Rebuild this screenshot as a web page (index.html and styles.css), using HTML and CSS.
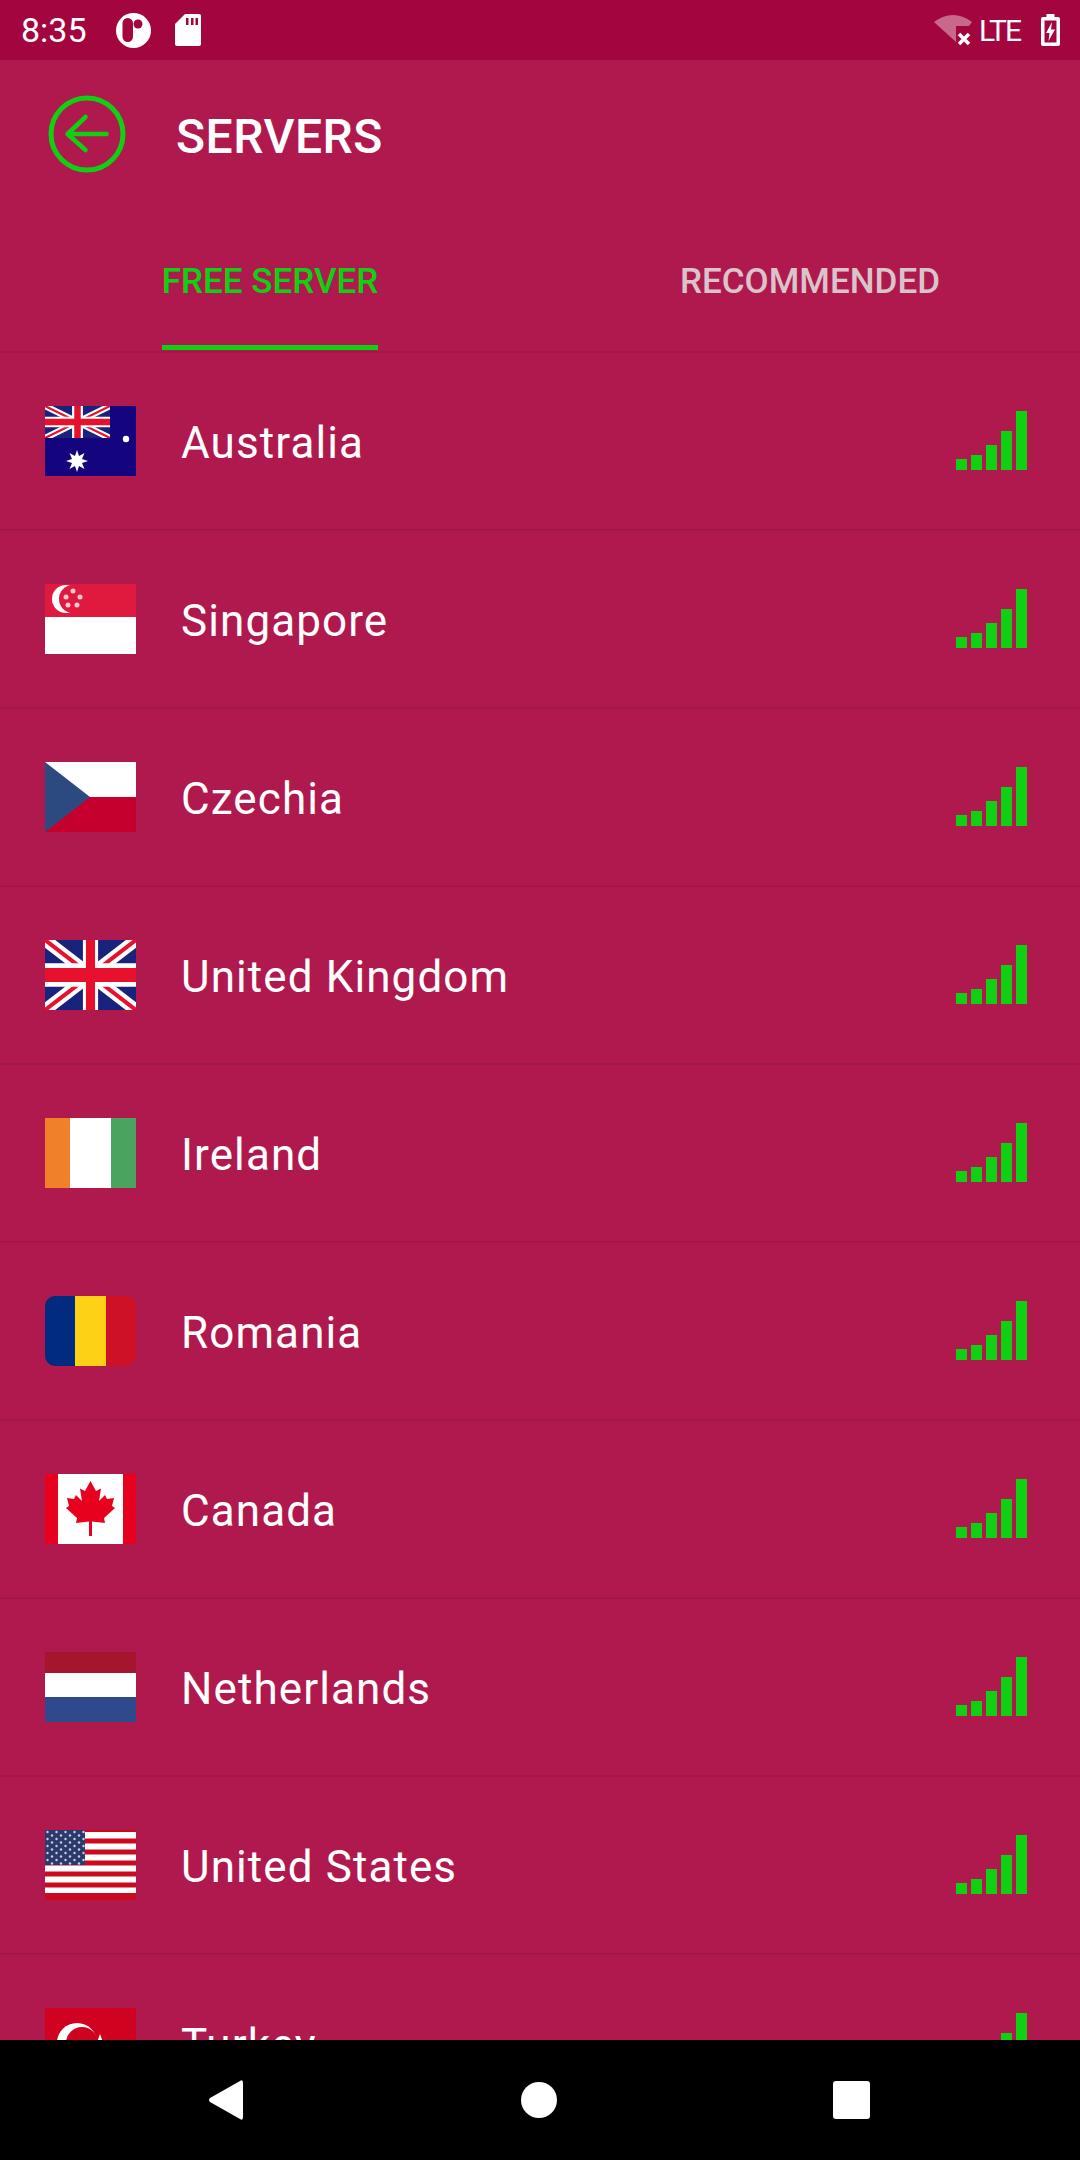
FILE: index.html
```html
<!DOCTYPE html>
<html lang="en">
<head>
  <meta charset="UTF-8" />
  <title>Servers</title>
  <link rel="stylesheet" href="styles.css">
</head>
<body>
  <svg class="defs" width="0" height="0">
    <defs>
      <symbol id="jack" viewBox="0 0 60 30" preserveAspectRatio="none">
        <rect width="60" height="30" fill="#1a237b"/>
        <path d="M0 0L60 30M60 0L0 30" stroke="#fff" stroke-width="6"/>
        <path d="M0 0L60 30M60 0L0 30" stroke="#e8112d" stroke-width="2"/>
        <path d="M30 0V30M0 15H60" stroke="#fff" stroke-width="10"/>
        <path d="M30 0V30M0 15H60" stroke="#e8112d" stroke-width="6"/>
      </symbol>
      <pattern id="usStars" width="9" height="7" patternUnits="userSpaceOnUse">
        <circle cx="2.500" cy="2" r="1.200" fill="#c9cfe0"/>
        <circle cx="7" cy="5.500" r="1.200" fill="#c9cfe0"/>
      </pattern>
    </defs>
  </svg>

  <div class="status">
    <div class="status-left">
      <span class="clock">8:35</span>
      <svg class="ic-p" width="35" height="35" viewBox="0 0 35 35">
        <circle cx="17.500" cy="17.500" r="17.500" fill="#fff"/>
        <rect x="6.500" y="5" width="10.500" height="24" rx="5.200" fill="#a3063e"/>
        <circle cx="22" cy="11" r="4.500" fill="#a3063e"/>
      </svg>
      <svg class="ic-sd" width="26" height="32" viewBox="0 0 26 32">
        <path d="M10 0H24a2 2 0 0 1 2 2V30a2 2 0 0 1-2 2H2a2 2 0 0 1-2-2V10Z" fill="#fff"/>
        <path d="M11 4h2.500v7H11zM16 4h2.500v7H16zM20.500 4H23v7h-2.500z" fill="#a3063e"/>
      </svg>
    </div>
    <div class="status-right">
      <svg class="ic-wifi" width="38" height="32" viewBox="0 0 38 32">
        <path d="M0 8Q19-6 38 8L35 12H22V28Z" fill="#fff" fill-opacity=".4"/>
        <path d="M25 20L35 30M35 20L25 30" stroke="#fff" stroke-width="3.500"/>
      </svg>
      <span class="lte">LTE</span>
      <svg class="ic-batt" width="19" height="32" viewBox="0 0 19 32">
        <path fill-rule="evenodd" d="M5.500 0H13.500V3H17a2 2 0 0 1 2 2V30a2 2 0 0 1-2 2H2a2 2 0 0 1-2-2V5a2 2 0 0 1 2-2H5.500ZM3.500 6.500V28.500H15.500V6.500Z" fill="#fff"/>
        <path d="M11 8L5 19H8.500L7.500 27L14 15.500H10Z" fill="#fff"/>
      </svg>
    </div>
  </div>

  <div class="toolbar">
    <svg class="back" width="80" height="80" viewBox="0 0 80 80">
      <circle cx="40" cy="40" r="36" fill="none" stroke="#10d014" stroke-width="5"/>
      <path d="M59.500 40H20.500M38.500 23L20.500 40L38.500 56" fill="none" stroke="#10d014" stroke-width="4.500" stroke-linecap="round" stroke-linejoin="round"/>
    </svg>
    <h1 class="title">SERVERS</h1>
  </div>

  <div class="tabs">
    <div class="tab active"><span>FREE SERVER</span></div>
    <div class="tab"><span>RECOMMENDED</span></div>
  </div>

  <div class="list">
    <div class="row">
      <svg class="flag" viewBox="0 0 91 70">
        <rect width="91" height="70" fill="#14057f"/>
        <use href="#jack" width="65" height="32"/>
        <path d="M32 44l2 6 5.500-3-2.500 6 6 2-6 2 2.500 6-5.500-3-2 6-2-6-5.500 3 2.500-6-6-2 6-2-2.500-6 5.500 3Z" fill="#fff"/>
        <circle cx="81" cy="33" r="3.200" fill="#fff"/>
      </svg>
      <span class="name">Australia</span>
      <div class="bars"><i></i><i></i><i></i><i></i><i></i></div>
    </div>
    <div class="row">
      <svg class="flag" viewBox="0 0 91 70">
        <rect width="91" height="33" fill="#e0193e"/>
        <rect y="33" width="91" height="37" fill="#fff"/>
        <circle cx="21" cy="15" r="14" fill="#fff"/>
        <circle cx="28" cy="15" r="14" fill="#e0193e"/>
        <g fill="#f6ccd3">
          <circle cx="28" cy="7" r="2.500"/><circle cx="35" cy="13" r="2.500"/><circle cx="32" cy="21" r="2.500"/><circle cx="23" cy="21" r="2.500"/><circle cx="21" cy="13" r="2.500"/>
        </g>
      </svg>
      <span class="name">Singapore</span>
      <div class="bars"><i></i><i></i><i></i><i></i><i></i></div>
    </div>
    <div class="row">
      <svg class="flag" viewBox="0 0 91 70">
        <rect width="91" height="35" fill="#fff"/>
        <rect y="35" width="91" height="35" fill="#c5002e"/>
        <path d="M0 0L45 35L0 70Z" fill="#2d4a80"/>
      </svg>
      <span class="name">Czechia</span>
      <div class="bars"><i></i><i></i><i></i><i></i><i></i></div>
    </div>
    <div class="row">
      <svg class="flag" viewBox="0 0 91 70"><use href="#jack" width="91" height="70"/></svg>
      <span class="name">United Kingdom</span>
      <div class="bars"><i></i><i></i><i></i><i></i><i></i></div>
    </div>
    <div class="row">
      <svg class="flag" viewBox="0 0 91 70">
        <rect width="25" height="70" fill="#f0802a"/>
        <rect x="25" width="41" height="70" fill="#fff"/>
        <rect x="66" width="25" height="70" fill="#4ba360"/>
      </svg>
      <span class="name">Ireland</span>
      <div class="bars"><i></i><i></i><i></i><i></i><i></i></div>
    </div>
    <div class="row">
      <svg class="flag flag-round" viewBox="0 0 91 70">
        <rect width="30" height="70" fill="#002b7f"/>
        <rect x="30" width="31" height="70" fill="#fcd116"/>
        <rect x="61" width="30" height="70" fill="#ce1126"/>
      </svg>
      <span class="name">Romania</span>
      <div class="bars"><i></i><i></i><i></i><i></i><i></i></div>
    </div>
    <div class="row">
      <svg class="flag" viewBox="0 0 91 70">
        <rect width="91" height="70" fill="#fff"/>
        <rect width="13" height="70" fill="#e8001f"/>
        <rect x="78" width="13" height="70" fill="#e8001f"/>
        <path d="M45.500 7L51 17L56 14.500L54 27L60 21L62 25L69 24L67 32L70 34L59 44L60 49L47 47.500V62H44V47.500L31 49L32 44L21 34L24 32L22 24L29 25L31 21L37 27L35 14.500L40 17Z" fill="#e8001f"/>
      </svg>
      <span class="name">Canada</span>
      <div class="bars"><i></i><i></i><i></i><i></i><i></i></div>
    </div>
    <div class="row">
      <svg class="flag" viewBox="0 0 91 70">
        <rect width="91" height="21" fill="#a5162e"/>
        <rect y="21" width="91" height="24" fill="#fff"/>
        <rect y="45" width="91" height="25" fill="#2f4a8c"/>
      </svg>
      <span class="name">Netherlands</span>
      <div class="bars"><i></i><i></i><i></i><i></i><i></i></div>
    </div>
    <div class="row">
      <svg class="flag" viewBox="0 0 91 70">
        <rect width="91" height="70" fill="#fff"/>
        <path d="M0 11H91M0 22H91M0 33H91M0 44H91M0 55H91" stroke="#cc0a1f" stroke-width="5"/>
        <rect width="91" height="2" fill="#cc0a1f"/>
        <rect y="63" width="91" height="7" fill="#cc0a1f"/>
        <rect width="40" height="35" fill="#2b3a6b"/>
        <rect width="40" height="35" fill="url(#usStars)"/>
      </svg>
      <span class="name">United States</span>
      <div class="bars"><i></i><i></i><i></i><i></i><i></i></div>
    </div>
    <div class="row">
      <svg class="flag" viewBox="0 0 91 70">
        <rect width="91" height="70" fill="#d0021f"/>
        <circle cx="32" cy="35" r="20" fill="#fff"/>
        <circle cx="37" cy="35" r="16" fill="#d0021f"/>
        <path d="M55 26l2.500 7 7.500 0-6 4.500 2 7-6-4-6 4 2-7-6-4.500 7.500 0Z" fill="#fff"/>
      </svg>
      <span class="name">Turkey</span>
      <div class="bars"><i></i><i></i><i></i><i></i><i></i></div>
    </div>
  </div>

  <div class="navbar">
    <svg width="36" height="40" viewBox="0 0 36 40"><path d="M32 1Q35-1 35 3V37Q35 41 32 39L2 22Q0 20 2 18Z" fill="#fff"/></svg>
    <svg width="36" height="36" viewBox="0 0 36 36"><circle cx="18" cy="18" r="18" fill="#fff"/></svg>
    <svg width="37" height="38" viewBox="0 0 37 38"><rect width="37" height="38" rx="3" fill="#fff"/></svg>
  </div>
</body>
</html>
```

FILE: styles.css
```css
* { box-sizing: border-box; }
body {
  margin: 0;
  width: 1080px;
  height: 2160px;
  overflow: hidden;
  display: flex;
  flex-direction: column;
  font-family: Roboto, sans-serif;
  background: #b0194e;
  color: white;
}
.defs { display: block; height: 0; }
.status {
  height: 60px;
  flex: none;
  background: #a3063e;
  display: flex;
  justify-content: space-between;
  align-items: center;
  padding: 0 20px 0 21px;
}
.status-left, .status-right {
  display: flex;
  align-items: center;
}
.clock { font-size: 34px; margin-right: 29px; }
.ic-sd { margin-left: 24px; }
.lte {
  font-size: 30px;
  letter-spacing: -2px;
  margin: 0 21px 0 7px;
}
.toolbar {
  height: 140px;
  flex: none;
  display: flex;
  align-items: center;
  padding-left: 47px;
  padding-top: 8px;
}
.back { flex: none; }
.title {
  margin: 5px 0 0 49px;
  font-size: 48px;
  font-weight: 500;
  letter-spacing: 0.5px;
}
.tabs {
  height: 153px;
  flex: none;
  display: flex;
  border-bottom: 2px solid #a31746;
}
.tab {
  flex: 1;
  display: flex;
  justify-content: center;
  align-items: flex-end;
  font-size: 35px;
  font-weight: 500;
  color: #d9c4cc;
}
.tab span {
  padding-bottom: 44px;
  line-height: 38px;
  border-bottom: 5px solid transparent;
  margin-bottom: 1px;
}
.tab.active { color: #10d014; }
.tab.active span { border-bottom-color: #10d014; }
.list {
  flex: 1;
  min-height: 0;
  overflow: hidden;
}
.row {
  height: 178px;
  display: flex;
  align-items: center;
  padding: 0 53px 0 45px;
  border-bottom: 2px solid #a31746;
}
.flag {
  width: 91px;
  height: 70px;
  flex: none;
}
.flag-round { border-radius: 10px; }
.name {
  flex: 1;
  margin: 3px 0 0 45px;
  font-size: 44px;
  letter-spacing: 1.1px;
}
.bars {
  display: flex;
  align-items: flex-end;
  gap: 4px;
  height: 58px;
}
.bars i { display: block; width: 11px; flex: none; background: #10d014; }
.bars i:nth-child(1) { height: 11px; }
.bars i:nth-child(2) { height: 15px; }
.bars i:nth-child(3) { height: 25px; }
.bars i:nth-child(4) { height: 39px; }
.bars i:nth-child(5) { height: 59px; }
.navbar {
  height: 120px;
  flex: none;
  background: black;
  display: flex;
  justify-content: space-between;
  align-items: center;
  padding: 0 210px 0 208px;
}
```
